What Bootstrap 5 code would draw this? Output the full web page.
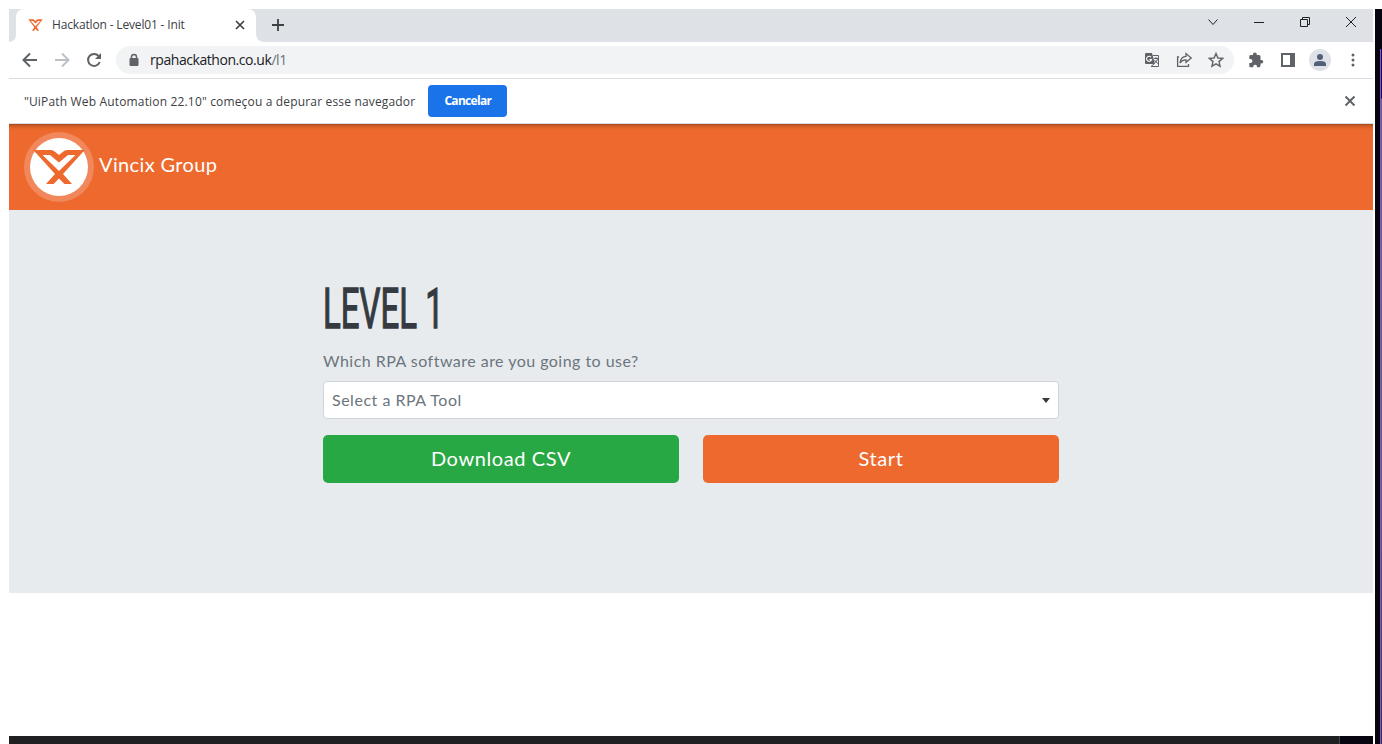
<!DOCTYPE html>
<html lang="pt">
<head>
<meta charset="utf-8">
<title>Hackatlon - Level01 - Init</title>
<link href="https://cdn.jsdelivr.net/npm/bootstrap@5.3.0/dist/css/bootstrap.min.css" rel="stylesheet">
<style>
body{background:#fff;height:744px;overflow:hidden;font-family:"Lato",sans-serif}
svg{display:block;flex:none}
.screen{height:744px;padding:9px 0 0 9px}
.browser{width:1364px;height:735px}
.ui{font-family:"Open Sans","Noto Sans",sans-serif;font-size:12px;color:#3c4043;white-space:nowrap}
.tabstrip{height:33px;background:#dee1e6}
.edge{width:7px;height:33px;border-bottom-right-radius:7px;background:#dee1e6}
.edge-bg{background:#fff}
.tab{width:240px;height:33px;background:#fff;border-radius:8px 8px 0 0;padding:0 11px 2px 12px}
.tab-name{letter-spacing:-.16px;margin-left:9px}
.after{width:8px;height:33px;background:#dee1e6;border-bottom-left-radius:8px}
.plus{margin:10px 0 0 8px}
.tools{height:37px;border-bottom:1px solid #dadce0;padding-left:13px;padding-right:12px}
.omni{height:28px;width:1118px;background:#f1f3f4;border-radius:14px;margin-left:14px;padding:0 10px 0 12px}
.url{font-size:14px;color:#202124;letter-spacing:-.44px;margin:-1px 0 0 10px}
.url-path{color:#6b7075}
.ext{margin-left:14px}
.avatar{width:22px;height:22px;border-radius:50%;background:#dee1e6;margin-left:12px}
.info{height:45px;padding:0 17px 0 15px;border-bottom:1px solid #dadce0}
.msg{letter-spacing:.165px;padding-top:2px}
.cancel{background:#1a73e8;color:#fff;width:79px;height:32px;font-size:12px;font-weight:700;border-radius:4px;padding:0;margin-left:13px;letter-spacing:-.7px}
.brandbar{height:86px;background:linear-gradient(#a64b20 0,#d15c27 2px,#e46529 4px,#ed692d 7px);padding:8px 15px}
.logo-ring{width:70px;height:70px;border-radius:50%;background:#f1875a}
.brand-name{font-size:20px;color:#fff;margin:-6px 0 0 5px;letter-spacing:.37px}
.hero{height:383px;background:#e7ebee;padding-top:71px}
.inner{width:736px;margin-left:314px}
.title{font:400 55px/56px "Roboto","Liberation Sans",sans-serif;color:#343a40;margin:0;-webkit-text-stroke:1.3px #343a40}
.title span{display:inline-block;transform:scaleX(.6);transform-origin:left}
.ask{font-size:16px;line-height:24px;color:#6c757d;margin:12px 0 8px;letter-spacing:.47px}
.pick{height:38px;border:1px solid #ced4da;border-radius:4px;background:#fff;color:#6c757d;padding:0 8px;font-size:16px;letter-spacing:.52px}
.act{height:48px;border:0;border-radius:5px;color:#fff;font-size:20px;letter-spacing:.6px;padding:0 0 2px}
.go{background:#ed692d}.csv{background:#28a745}
.act:hover,.cancel:hover{color:#fff}
.foot{height:8px;background:#1f2022}
.foot-end{width:34px;background:#07050f;border-left:1px solid #44454a}
.side{width:7px;height:735px;margin-left:2px;background:#07050f;padding-top:40px}
.strip{width:2px;height:695px;margin-left:5px;background:linear-gradient(90deg,#8550dc 50%,transparent 50%),linear-gradient(#170c46 0 49px,#6d6375 50px 200px,#556950 330px,#6a596d 450px,#4d4850 590px,#35333d)}
</style>
</head>
<body>
<div class="screen d-flex">
<div class="browser d-flex flex-column">
 <div class="tabstrip ui d-flex">
  <div class="edge-bg"><div class="edge"></div></div>
  <div class="tab d-flex align-items-center">
   <svg width="15" height="12" viewBox="8 17 54 36" preserveAspectRatio="none"><path fill="#ed692d" fill-rule="evenodd" d="M9 18H27Q29 18 31 19.800L35 23L39 19.800Q41 18 43 18H61Q60 19 58 21L39 42L48 52H40.500L35 46.500L29.500 52H22L31 42L12 21ZM18.500 23L35 39L51.500 23H44L35 30.500L26 23Z"/></svg>
   <span class="tab-name">Hackatlon - Level01 - Init</span>
   <svg class="ms-auto" width="10" height="10" viewBox="0 0 10 10" stroke="#3c4043" stroke-width="1.7"><path d="M1 1L9 9M9 1L1 9"/></svg>
  </div>
  <div class="edge-bg"><div class="after"></div></div>
  <svg class="plus" width="12" height="12" viewBox="0 0 12 12" stroke="#3c4043" stroke-width="1.8"><path d="M6 0V12M0 6H12"/></svg>
  <svg class="ms-auto" width="166" height="26" viewBox="1207 9 166 26" fill="none" stroke="#202124"><path d="M1208.500 19.500L1213 24.500L1217.500 19.500M1254 22.500H1264M1300.500 19.500H1307.500V26.500H1300.500ZM1302.500 19V17.500H1309.500V24.500H1308M1346 17L1356 27M1356 17L1346 27"/></svg>
 </div>
 <div class="tools ui d-flex align-items-center">
  <svg width="80" height="16" viewBox="22 52 80 16" fill="none" stroke="#5f6368" stroke-width="2"><path d="M37 60H24M30 53.500L23.500 60L30 66.500"/><path stroke="#bdc1c6" d="M55 60H68M62 53.500L68.500 60L62 66.500"/><path d="M99 56.500A6 6 0 1 0 99.700 62"/><path d="M101 53V59H95Z" fill="#5f6368" stroke="none"/></svg>
  <div class="omni d-flex align-items-center">
   <svg width="12" height="14" viewBox="0 0 12 14"><path d="M3.500 6V4A2.500 2.500 0 0 1 8.500 4V6" fill="none" stroke="#5f6368" stroke-width="1.500"/><rect x="1.500" y="5" width="9" height="8" rx="1" fill="#5f6368"/></svg>
   <span class="url">rpahackathon.co.uk<span class="url-path">/l1</span></span>
   <svg class="ms-auto" width="80" height="18" viewBox="1144 51 80 18" fill="none" stroke="#5f6368" stroke-width="1.300"><path d="M1146 53H1152L1155 64H1146Q1145 64 1145 63V54Q1145 53 1146 53Z" fill="#5f6368" stroke="none"/><path d="M1153 55.500H1158.500V66.500H1151L1154 64M1154 58.500H1158M1156 57V58.500M1157.500 59Q1157 61.500 1154.500 63M1154.500 60Q1156 62.500 1158 63.500" stroke-width="1"/><path d="M1151 57.200A2.500 2.500 0 1 0 1151.500 59.500H1149.500" stroke="#fff" stroke-width="1.100"/><path d="M1179 57H1177.600V66.400H1188.500V64M1180 63C1180.500 58.500 1183 56.500 1186 56.300V53.600L1191.200 58L1186 62.300V59.800C1183.500 59.700 1181.500 60.800 1180 63Z"/><path d="M1216 53.500L1217.900 58L1222.700 58.400L1219 61.600L1220.100 66.300L1216 63.800L1211.900 66.300L1213 61.600L1209.300 58.400L1214.100 58Z" stroke-width="1.400"/></svg>
  </div>
  <svg class="ext" width="49" height="18" viewBox="1248 51 49 18" fill="#5f6368"><path d="M1261.500 60H1260.500V56.500Q1260.500 55 1259 55H1256.800V54.300A1.900 1.900 0 0 0 1253 54.300V55H1250.600Q1249.300 55 1249.300 56.400V59H1250.400A1.900 1.900 0 0 1 1250.400 63H1249.300V66Q1249.300 67.200 1250.600 67.200H1253.300V66.300A1.900 1.900 0 0 1 1257 66.300V67.200H1259Q1260.500 67.200 1260.500 65.800V63.600H1261.500A1.800 1.800 0 0 0 1261.500 60Z"/><path fill-rule="evenodd" d="M1281 53H1295V67H1281ZM1283 55V65H1290V55Z"/></svg>
  <div class="avatar d-flex justify-content-center align-items-center"><svg width="12" height="12" fill="#526079"><circle cx="6" cy="3" r="3"/><path d="M0 12V10Q0 7 6 7Q12 7 12 10V12Z"/></svg></div>
  <svg class="ms-auto me-1" width="8" height="14" viewBox="0 0 8 14" fill="#5f6368"><circle cx="4" cy="2" r="1.500"/><circle cx="4" cy="7" r="1.500"/><circle cx="4" cy="12" r="1.500"/></svg>
 </div>
 <div class="info ui d-flex align-items-center">
  <span class="msg">"UiPath Web Automation 22.10" começou a depurar esse navegador</span>
  <button class="btn cancel">Cancelar</button>
  <svg class="ms-auto" width="12" height="12" viewBox="0 0 12 12" stroke="#5f6368" stroke-width="2"><path d="M1.500 1.500L10.500 10.500M10.500 1.500L1.500 10.500"/></svg>
 </div>
 <header class="brandbar d-flex align-items-center">
  <div class="logo-ring"><svg width="70" height="70" viewBox="0 0 70 70"><circle cx="35" cy="35" r="29" fill="#fff"/><path fill="#ed692d" fill-rule="evenodd" d="M9 18H27Q29 18 31 19.800L35 23L39 19.800Q41 18 43 18H61Q60 19 58 21L39 42L48 52H40.500L35 46.500L29.500 52H22L31 42L12 21ZM18.500 23L35 39L51.500 23H44L35 30.500L26 23Z"/></svg></div>
  <span class="brand-name">Vincix Group</span>
 </header>
 <main class="hero">
  <div class="inner">
   <h1 class="title"><span>LEVEL 1</span></h1>
   <p class="ask">Which RPA software are you going to use?</p>
   <div class="pick d-flex align-items-center justify-content-between"><span>Select a RPA Tool</span><svg width="8" height="5" fill="#343a40"><path d="M0 0H8L4 5Z"/></svg></div>
   <div class="row mt-3">
    <div class="col-6"><button class="btn act csv w-100">Download CSV</button></div>
    <div class="col-6"><button class="btn act go w-100">Start</button></div>
   </div>
  </div>
 </main>
 <div class="foot d-flex justify-content-end mt-auto"><div class="foot-end"></div></div>
</div>
<aside class="side"><div class="strip"></div></aside>
</div>
<script src="https://cdn.jsdelivr.net/npm/bootstrap@5.3.0/dist/js/bootstrap.bundle.min.js"></script>
</body>
</html>
